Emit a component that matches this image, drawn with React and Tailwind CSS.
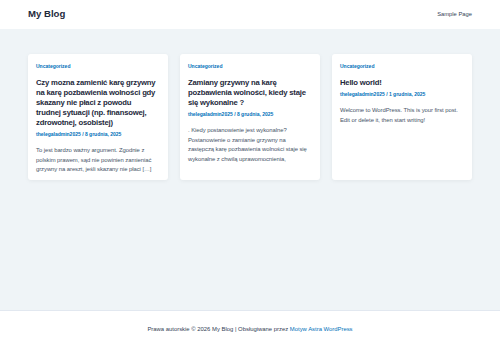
import React from 'react';

const posts = [
  {
    title: 'Czy mozna zamienić karę grzywny na karę pozbawienia wolności gdy skazany nie płaci z powodu trudnej sytuacji (np. finansowej, zdrowotnej, osobistej)',
    meta: 'thelegaladmin2025 / 8 grudnia, 2025',
    excerpt: 'To jest bardzo ważny argument. Zgodnie z polskim prawem, sąd nie powinien zamieniać grzywny na areszt, jeśli skazany nie płaci […]',
  },
  {
    title: 'Zamiany grzywny na karę pozbawienia wolności, kiedy staje się wykonalne ?',
    meta: 'thelegaladmin2025 / 8 grudnia, 2025',
    excerpt: '. Kiedy postanowienie jest wykonalne? Postanowienie o zamianie grzywny na zastępczą karę pozbawienia wolności staje się wykonalne z chwilą uprawomocnienia,',
  },
  {
    title: 'Hello world!',
    meta: 'thelegaladmin2025 / 1 grudnia, 2025',
    excerpt: 'Welcome to WordPress. This is your first post. Edit or delete it, then start writing!',
  },
];

const PostCard = ({ post }) => (
  <article className="bg-white rounded-[3px] shadow-[0_1px_4px_rgba(0,0,0,0.06)] px-[8px] pt-[9px] h-[126px]">
    <div className="text-[5px] font-bold text-[#0170B9] leading-[7px]">Uncategorized</div>
    <h2 className="mt-[7.5px] pr-[3px] text-[7.7px] font-bold tracking-[-0.2px] text-[#1e293b] leading-[10px]">{post.title}</h2>
    <div className="mt-[3.5px] text-[5px] font-bold text-[#0170B9] leading-[7px]">{post.meta}</div>
    <p className="mt-[8px] text-[5.9px] tracking-[-0.06px] text-[#475569] leading-[9.7px]">{post.excerpt}</p>
  </article>
);

const App = () => {
  return (
    <div className="w-[500px] h-[348px] flex flex-col bg-[#eff4f7] font-['Liberation_Sans',Arial,sans-serif]">
      <header className="h-[29px] bg-white flex items-center justify-between px-[28px] shrink-0">
        <div className="text-[9.6px] font-bold text-[#1e293b]">My Blog</div>
        <nav className="text-[5.8px] text-[#334155]">Sample Page</nav>
      </header>
      <main className="flex-1 px-[28px] pt-[25px]">
        <div className="grid grid-cols-3 gap-[12px]">
          {posts.map((post, i) => (
            <PostCard key={i} post={post} />
          ))}
        </div>
      </main>
      <footer className="h-[38px] bg-white border-t border-[#e2e8f0] flex items-center justify-center shrink-0">
        <p className="text-[5.9px] text-[#334155]">
          Prawa autorskie © 2026 My Blog | Obsługiwane przez{' '}
          <span className="text-[#0170B9]">Motyw Astra WordPress</span>
        </p>
      </footer>
    </div>
  );
};

export default App;
